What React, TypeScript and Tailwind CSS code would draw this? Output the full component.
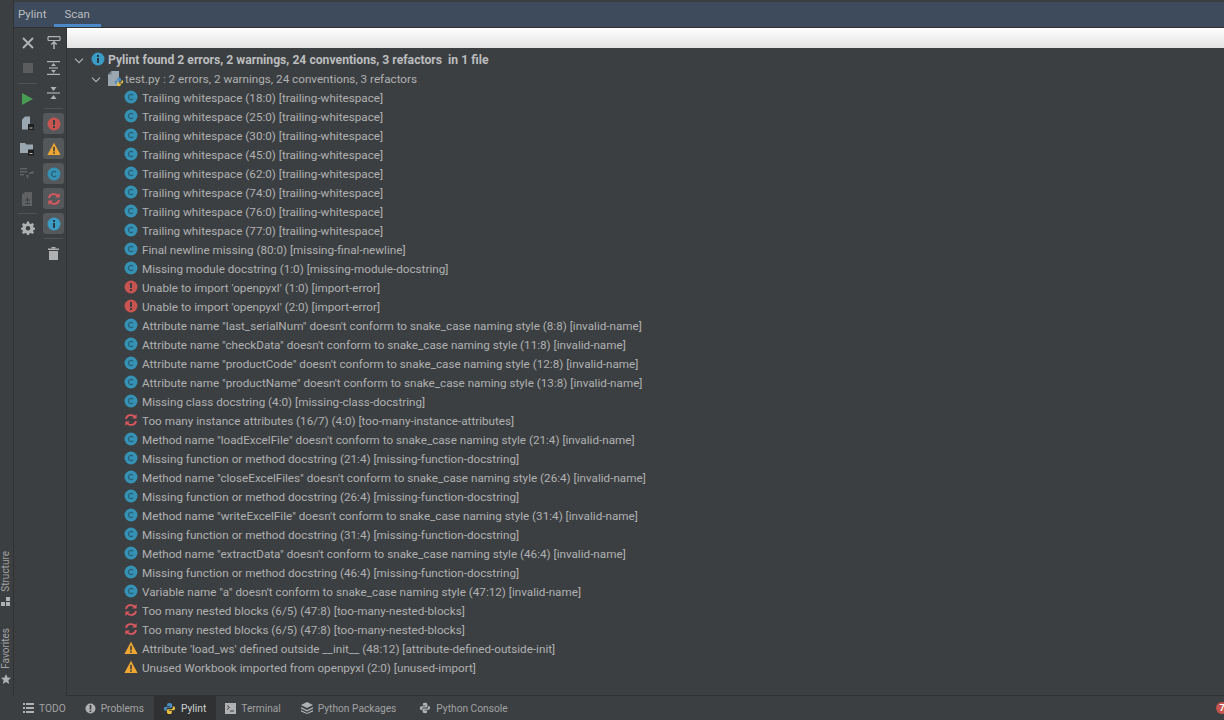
import React from "react";

type Kind = "c" | "e" | "r" | "w";

const rows: [Kind, string][] = [
  ["c", "Trailing whitespace (18:0) [trailing-whitespace]"],
  ["c", "Trailing whitespace (25:0) [trailing-whitespace]"],
  ["c", "Trailing whitespace (30:0) [trailing-whitespace]"],
  ["c", "Trailing whitespace (45:0) [trailing-whitespace]"],
  ["c", "Trailing whitespace (62:0) [trailing-whitespace]"],
  ["c", "Trailing whitespace (74:0) [trailing-whitespace]"],
  ["c", "Trailing whitespace (76:0) [trailing-whitespace]"],
  ["c", "Trailing whitespace (77:0) [trailing-whitespace]"],
  ["c", "Final newline missing (80:0) [missing-final-newline]"],
  ["c", "Missing module docstring (1:0) [missing-module-docstring]"],
  ["e", "Unable to import 'openpyxl' (1:0) [import-error]"],
  ["e", "Unable to import 'openpyxl' (2:0) [import-error]"],
  ["c", 'Attribute name "last_serialNum" doesn\'t conform to snake_case naming style (8:8) [invalid-name]'],
  ["c", 'Attribute name "checkData" doesn\'t conform to snake_case naming style (11:8) [invalid-name]'],
  ["c", 'Attribute name "productCode" doesn\'t conform to snake_case naming style (12:8) [invalid-name]'],
  ["c", 'Attribute name "productName" doesn\'t conform to snake_case naming style (13:8) [invalid-name]'],
  ["c", "Missing class docstring (4:0) [missing-class-docstring]"],
  ["r", "Too many instance attributes (16/7) (4:0) [too-many-instance-attributes]"],
  ["c", 'Method name "loadExcelFile" doesn\'t conform to snake_case naming style (21:4) [invalid-name]'],
  ["c", "Missing function or method docstring (21:4) [missing-function-docstring]"],
  ["c", 'Method name "closeExcelFiles" doesn\'t conform to snake_case naming style (26:4) [invalid-name]'],
  ["c", "Missing function or method docstring (26:4) [missing-function-docstring]"],
  ["c", 'Method name "writeExcelFile" doesn\'t conform to snake_case naming style (31:4) [invalid-name]'],
  ["c", "Missing function or method docstring (31:4) [missing-function-docstring]"],
  ["c", 'Method name "extractData" doesn\'t conform to snake_case naming style (46:4) [invalid-name]'],
  ["c", "Missing function or method docstring (46:4) [missing-function-docstring]"],
  ["c", 'Variable name "a" doesn\'t conform to snake_case naming style (47:12) [invalid-name]'],
  ["r", "Too many nested blocks (6/5) (47:8) [too-many-nested-blocks]"],
  ["r", "Too many nested blocks (6/5) (47:8) [too-many-nested-blocks]"],
  ["w", "Attribute 'load_ws' defined outside __init__ (48:12) [attribute-defined-outside-init]"],
  ["w", "Unused Workbook imported from openpyxl (2:0) [unused-import]"],
];

function ConventionIcon() {
  return (
    <svg width="14" height="14" viewBox="0 0 14 14">
      <circle cx="7" cy="7" r="6.5" fill="#3592b5" />
      <path d="M9 5.2A2.6 2.6 0 1 0 9 8.8" fill="none" stroke="#2b5f75" strokeWidth="1.3" />
    </svg>
  );
}

function ErrorIcon() {
  return (
    <svg width="14" height="14" viewBox="0 0 14 14">
      <circle cx="7" cy="7" r="6.5" fill="#c75450" />
      <rect x="6" y="3" width="2" height="5" fill="#3c3f41" />
      <rect x="6" y="9" width="2" height="2" fill="#3c3f41" />
    </svg>
  );
}

function RefactorIcon() {
  return (
    <svg width="14" height="14" viewBox="0 0 14 14" fill="none" stroke="#db5860" strokeWidth="1.8">
      <path d="M2 6A5 4.6 0 0 1 11 4" />
      <path d="M12 8A5 4.6 0 0 1 3 10" />
      <path d="M12.6 1v4.4H8.2z" fill="#db5860" stroke="none" />
      <path d="M1.4 13V8.6h4.4z" fill="#db5860" stroke="none" />
    </svg>
  );
}

function WarnIcon() {
  return (
    <svg width="14" height="14" viewBox="0 0 14 14">
      <path d="M7 0.8 13.6 13H0.4z" fill="#f0a732" />
      <rect x="6.2" y="4.8" width="1.6" height="4.6" fill="#3c3f41" />
      <rect x="6.2" y="10.2" width="1.6" height="1.6" fill="#3c3f41" />
    </svg>
  );
}

function InfoIcon() {
  return (
    <svg width="14" height="14" viewBox="0 0 14 14">
      <circle cx="7" cy="7" r="6.5" fill="#3a9bc4" />
      <rect x="6" y="6" width="2" height="5" fill="#2b3a42" />
      <rect x="6" y="3" width="2" height="2" fill="#2b3a42" />
    </svg>
  );
}

function PythonIcon({ size = 14, mono = false }: { size?: number; mono?: boolean }) {
  return (
    <svg width={size} height={size} viewBox="0 0 14 14">
      <path d="M7 1C4.6 1 4.5 2 4.5 3v1.2H7.500V5H3C1.700 5 1 6 1 7.200 1 8.400 1.700 9.300 3 9.300h.8V8C3.800 7 4.600 6.300 5.500 6.300h3C9.300 6.300 9.800 5.700 9.800 5V3C9.800 1.800 8.800 1 7 1z" fill={mono ? "#afb1b3" : "#4a8fc4"} />
      <path d="M7 13c2.400 0 2.500-1 2.500-2V9.800H6.500V9H11c1.300 0 2-1 2-2.200 0-1.200-.7-2.100-2-2.100h-.4V6c0 1-.8 1.700-1.700 1.700h-3.400C4.700 7.700 4.200 8.300 4.200 9v2C4.200 12.200 5.200 13 7 13z" fill={mono ? "#afb1b3" : "#e8bf3f"} />
    </svg>
  );
}

function FileIcon() {
  return (
    <svg width="11" height="15" viewBox="0 0 11 15">
      <path d="M0 3.500 3.500 0H11v15H0z" fill="#9aa7b0" />
      <path d="M0 3.500h3.500V0z" fill="#6e7a83" />
    </svg>
  );
}

function ToolIcon({ children }: { children: React.ReactNode }) {
  return <div className="flex h-[25px] w-[21px] shrink-0 items-center justify-center">{children}</div>;
}

function Toggle({ children }: { children: React.ReactNode }) {
  return (
    <div className="my-[2px] flex h-[21px] w-[21px] shrink-0 items-center justify-center rounded-[3px] bg-[#55585a]">
      {children}
    </div>
  );
}

function Sep({ size = "md" }: { size?: "sm" | "md" | "lg" }) {
  const margin = size === "lg" ? "my-[2.5px]" : size === "sm" ? "my-[1.5px]" : "my-[2px]";
  return <div className={`${margin} h-[1px] w-[19px] shrink-0 bg-[#505254]`} />;
}

function Chevron() {
  return (
    <svg width="10" height="6" viewBox="0 0 10 6" fill="none" stroke="#afb1b3" strokeWidth="1.200">
      <path d="M1 .7 5 4.700 9 .7" />
    </svg>
  );
}

function Row({ kind, text }: { kind: Kind; text: string }) {
  return (
    <div className="flex h-[19px] items-center pl-[57px] text-[11.7px] text-[#afb1b3]">
      <span className="mt-[-3px] mr-[4px] flex w-[14px] shrink-0">
        {kind === "c" && <ConventionIcon />}
        {kind === "e" && <ErrorIcon />}
        {kind === "r" && <RefactorIcon />}
        {kind === "w" && <WarnIcon />}
      </span>
      <span className="whitespace-nowrap">{text}</span>
    </div>
  );
}

function BottomTab({ icon, label, active }: { icon: React.ReactNode; label: string; active?: boolean }) {
  return (
    <div className={`flex h-[24px] items-center gap-[5px] px-[9.5px] text-[10.2px] ${active ? "bg-[#2f3133] text-[#d0d2d4]" : "text-[#a0a2a4]"}`}>
      {icon}
      <span className="pt-[1px]">{label}</span>
    </div>
  );
}

export default function App() {
  return (
    <div className="flex h-[720px] w-[1224px] flex-col overflow-hidden bg-[#3c3f41] font-['Roboto','Noto_Sans',sans-serif]">
      <div className="flex min-h-0 flex-1">
        {/* far left strip */}
        <div className="flex w-[14px] shrink-0 flex-col justify-end border-r border-[#323232] pr-[2px] pb-[12px] text-[10px] text-[#a0a2a4]">
          <div className="flex flex-col items-center gap-[22px]">
            <div className="flex flex-col items-center gap-[6px]">
              <span className="rotate-180 leading-[11px] [writing-mode:vertical-rl]">Structure</span>
              <svg width="9" height="9" viewBox="0 0 9 9" fill="#afb1b3"><rect x="0" y="5" width="4" height="4" /><rect x="5" y="5" width="4" height="4" /><rect x="5" y="0" width="4" height="4" /></svg>
            </div>
            <div className="flex flex-col items-center gap-[5px]">
              <span className="rotate-180 leading-[11px] [writing-mode:vertical-rl]">Favorites</span>
              <svg width="10" height="10" viewBox="0 0 10 10" fill="#afb1b3"><path d="M5 0 6.500 3.400 10 3.800 7.400 6.200 8.100 10 5 8 1.900 10 2.600 6.200 0 3.800 3.500 3.400z" /></svg>
            </div>
          </div>
        </div>

        <div className="flex min-w-0 flex-1 flex-col">
          {/* tabs */}
          <div className="mt-[2px] flex h-[26px] shrink-0 items-stretch border-b border-[#323232] bg-[#3d4b5c] text-[11.5px] text-[#bbbdbf]">
            <div className="flex items-center px-[4px]">Pylint</div>
            <div className="relative ml-[3px] flex items-center px-[11px]">
              Scan
              <div className="absolute right-0 bottom-0 left-0 h-[3px] bg-[#4a88c7]" />
            </div>
          </div>

          <div className="flex min-h-0 flex-1">
            {/* toolbars */}
            <div className="flex w-[27px] shrink-0 flex-col items-center pt-[2px]">
              <ToolIcon>
                <svg width="12" height="12" viewBox="0 0 12 12" stroke="#afb1b3" strokeWidth="2"><path d="M1 1l10 10M11 1 1 11" /></svg>
              </ToolIcon>
              <ToolIcon>
                <div className="h-[10px] w-[10px] bg-[#5a5c5e]" />
              </ToolIcon>
              <Sep size="lg" />
              <ToolIcon>
                <svg width="11" height="12" viewBox="0 0 11 12"><path d="M0 0 11 6 0 12z" fill="#499c54" /></svg>
              </ToolIcon>
              <ToolIcon>
                <svg width="14" height="15" viewBox="0 0 14 15">
                  <path d="M1 3.500 4 .5h5v13H1z" fill="#9aa7b0" />
                  <rect x="7" y="8" width="6" height="6" fill="#1f2021" />
                  <rect x="8.500" y="11.500" width="3" height="1" fill="#bbb" />
                </svg>
              </ToolIcon>
              <ToolIcon>
                <svg width="15" height="14" viewBox="0 0 15 14">
                  <path d="M0 1h5l1.500 1.500H13V11H0z" fill="#9aa7b0" />
                  <rect x="8" y="7.500" width="6" height="6" fill="#1f2021" />
                  <rect x="9.500" y="11" width="3" height="1" fill="#bbb" />
                </svg>
              </ToolIcon>
              <ToolIcon>
                <svg width="15" height="14" viewBox="0 0 15 14" fill="#5f6163">
                  <rect x="0" y="1" width="7" height="1.500" /><rect x="0" y="4" width="7" height="1.500" /><rect x="0" y="7" width="4" height="1.500" />
                  <path d="M6 8h3l-1.500 4zM8 6l6-2-1 3h-3z" />
                </svg>
              </ToolIcon>
              <ToolIcon>
                <svg width="11" height="14" viewBox="0 0 11 14"><path d="M0 3 3 0h7v14H0z" fill="#5f6163" /><path d="M3 8h5M5.500 5.500v5M3 11.500h5" stroke="#3c3f41" /></svg>
              </ToolIcon>
              <Sep size="sm" />
              <ToolIcon>
                <svg width="14" height="14" viewBox="0 0 14 14">
                  <path fillRule="evenodd" d="M6 .5h2l.4 1.900 1.500.6L11.500 2 13 3.400 12 5l.6 1.500 1.900.4v1.700l-1.900.4L12 10l1 1.600L11.500 13l-1.600-1-1.500.6L8 14H6l-.4-1.400-1.500-.6-1.600 1L1 11.600 2 10l-.6-1.100L0 8.600V6.900l1.400-.4L2 5 1 3.400 2.500 2l1.600 1 1.500-.6zM7 5a2.300 2.300 0 1 0 0 4.600A2.300 2.300 0 0 0 7 5z" fill="#afb1b3" />
                </svg>
              </ToolIcon>
            </div>

            <div className="flex w-[26px] shrink-0 flex-col items-center border-r border-[#323232] pt-[2px]">
              <ToolIcon>
                <svg width="14" height="14" viewBox="0 0 14 14" fill="none" stroke="#afb1b3" strokeWidth="1.200">
                  <path d="M1 .7h12M1 4.500h12M1 .7v3.800M13 .7v3.800" />
                  <path d="M7 13V6M4.300 8.500 7 5.800l2.700 2.700" strokeWidth="1.500" />
                </svg>
              </ToolIcon>
              <ToolIcon>
                <svg width="13" height="14" viewBox="0 0 13 14" stroke="#afb1b3" strokeWidth="1.200" fill="#afb1b3">
                  <path d="M0 .7h13M0 13.300h13" />
                  <path d="M6.500 2 9 5H4zM6.500 12 4 9h5z" stroke="none" />
                  <path d="M2 7h9" />
                </svg>
              </ToolIcon>
              <ToolIcon>
                <svg width="13" height="14" viewBox="0 0 13 14" stroke="#afb1b3" strokeWidth="1.200" fill="#afb1b3">
                  <path d="M0 7h13" />
                  <path d="M3.500 1h6L6.500 5zM3.500 13h6L6.500 9z" stroke="none" />
                </svg>
              </ToolIcon>
              <Sep size="lg" />
              <Toggle><ErrorIcon /></Toggle>
              <Toggle><WarnIcon /></Toggle>
              <Toggle><ConventionIcon /></Toggle>
              <Toggle><RefactorIcon /></Toggle>
              <Toggle><InfoIcon /></Toggle>
              <Sep />
              <ToolIcon>
                <svg width="11" height="13" viewBox="0 0 11 13" fill="#afb1b3">
                  <rect x="0" y="1.500" width="11" height="1.500" /><rect x="3.500" y="0" width="4" height="1.500" /><path d="M1 4h9v9H1z" />
                </svg>
              </ToolIcon>
            </div>

            {/* results */}
            <div className="flex min-w-0 flex-1 flex-col border-b border-[#323232]">
              <div className="h-[20px] shrink-0 bg-gradient-to-b from-[#ffffff] to-[#e2e2e2]" />
              <div className="pt-[3px]">
                <div className="flex h-[19px] items-center pl-[7px] text-[12.2px] font-bold text-[#bbbdbf]">
                  <span className="mr-[7px] flex w-[10px]"><Chevron /></span>
                  <span className="mt-[-3px] mr-[3px] flex"><InfoIcon /></span>
                  <span className="whitespace-nowrap">Pylint found 2 errors, 2 warnings, 24 conventions, 3 refactors&nbsp; in 1 file</span>
                </div>
                <div className="flex h-[19px] items-center pl-[24px] text-[11.7px] text-[#afb1b3]">
                  <span className="mr-[7px] flex w-[10px]"><Chevron /></span>
                  <span className="relative mt-[-3px] mr-[2px] h-[15px] w-[15px] shrink-0">
                    <FileIcon />
                    <span className="absolute right-[-1px] bottom-[-1px]"><PythonIcon size={10} /></span>
                  </span>
                  <span className="whitespace-nowrap">test.py : 2 errors, 2 warnings, 24 conventions, 3 refactors</span>
                </div>
                {rows.map(([kind, text], i) => (
                  <Row key={i} kind={kind} text={text} />
                ))}
              </div>
            </div>
          </div>
        </div>
      </div>

      {/* bottom bar */}
      <div className="relative flex h-[24px] shrink-0 items-center pl-[13.5px]">
        <BottomTab
          label="TODO"
          icon={
            <svg width="11" height="10" viewBox="0 0 11 10" fill="#afb1b3"><path d="M0 0h2v2H0zM3 0h8v2H3zM0 4h2v2H0zM3 4h8v2H3zM0 8h2v2H0zM3 8h8v2H3z" /></svg>
          }
        />
        <BottomTab
          label="Problems"
          icon={
            <svg width="11" height="11" viewBox="0 0 11 11"><circle cx="5.500" cy="5.500" r="5" fill="#afb1b3" /><rect x="4.700" y="2" width="1.600" height="4.500" fill="#3c3f41" /><rect x="4.700" y="7.500" width="1.600" height="1.600" fill="#3c3f41" /></svg>
          }
        />
        <BottomTab label="Pylint" active icon={<PythonIcon size={13} />} />
        <BottomTab
          label="Terminal"
          icon={
            <svg width="11" height="11" viewBox="0 0 11 11"><rect width="11" height="11" fill="#afb1b3" /><path d="M2 2.500 4.500 4.500 2 6.500" fill="none" stroke="#3c3f41" /><path d="M5 8h4" stroke="#3c3f41" /></svg>
          }
        />
        <div className="w-[1px]" />
        <BottomTab
          label="Python Packages"
          icon={
            <svg width="12" height="12" viewBox="0 0 12 12" fill="#afb1b3"><path d="M6 0 12 3 6 6 0 3z" /><path d="M0 5 6 8 12 5V6.500L6 9.500 0 6.500z" /><path d="M0 8 6 11 12 8V9.500L6 12 0 9.500z" /></svg>
          }
        />
        <div className="w-[4px]" />
        <BottomTab label="Python Console" icon={<PythonIcon size={12} mono />} />
        <div className="absolute top-[6px] right-[-4px] flex h-[12px] w-[12px] items-center justify-center rounded-full bg-[#c75450] text-[9px] font-bold leading-none text-white">7</div>
      </div>
    </div>
  );
}
